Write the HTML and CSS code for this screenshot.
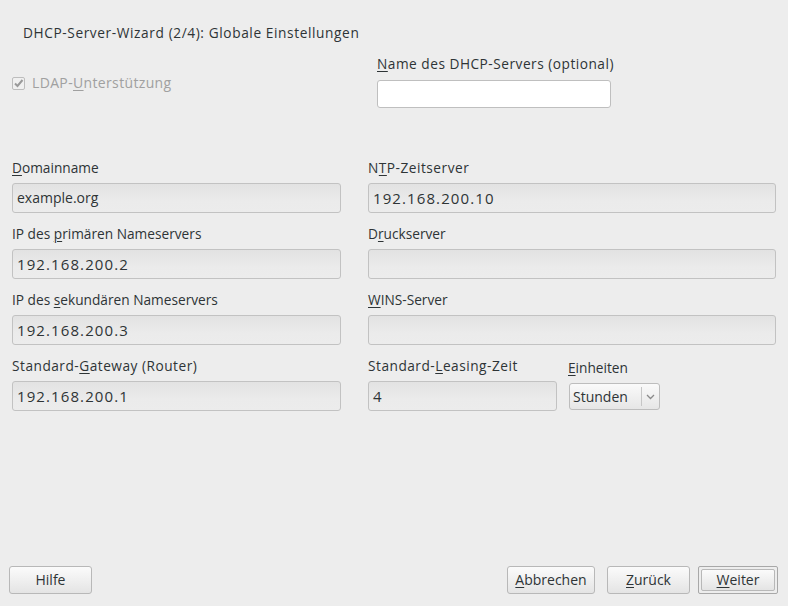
FILE: index.html
```html
<!DOCTYPE html>
<html lang="de">
<head>
<meta charset="utf-8">
<title>DHCP-Server-Wizard</title>
<link rel="stylesheet" href="styles.css">
</head>
<body>
<div class="page">
  <div class="title">DHCP-Server-Wizard (2/4): Globale Einstellungen</div>
  <div class="toprow">
    <div class="check">
      <span class="box"><svg width="11" height="11" viewBox="0 0 11 11"><path d="M2 5.5 L4.5 8 L9.5 2" fill="none" stroke="#9a9a9a" stroke-width="2"/></svg></span>
      <span class="checklabel">LDAP-<u>U</u>nterstützung</span>
    </div>
    <div class="namefield">
      <div class="label wide"><u>N</u>ame des DHCP-Servers (optional)</div>
      <div class="input white"></div>
    </div>
  </div>
  <div class="grid">
    <div class="field">
      <div class="label"><u>D</u>omainname</div>
      <div class="input">example.org</div>
    </div>
    <div class="field">
      <div class="label wide">N<u>T</u>P-Zeitserver</div>
      <div class="input ip">192.168.200.10</div>
    </div>
    <div class="field">
      <div class="label">IP des <u>p</u>rimären Nameservers</div>
      <div class="input ip">192.168.200.2</div>
    </div>
    <div class="field">
      <div class="label">D<u>r</u>uckserver</div>
      <div class="input"></div>
    </div>
    <div class="field">
      <div class="label">IP des <u>s</u>ekundären Nameservers</div>
      <div class="input ip">192.168.200.3</div>
    </div>
    <div class="field">
      <div class="label"><u>W</u>INS-Server</div>
      <div class="input"></div>
    </div>
    <div class="field">
      <div class="label wide">Standard-<u>G</u>ateway (Router)</div>
      <div class="input ip">192.168.200.1</div>
    </div>
    <div class="leaserow">
      <div class="field lease">
        <div class="label wide">Standard-<u>L</u>easing-Zeit</div>
        <div class="input ip">4</div>
      </div>
      <div class="field units">
        <div class="label unitlabel"><u>E</u>inheiten</div>
        <div class="combo">
          <span class="combotext">Stunden</span>
          <span class="comboarrow"><svg width="9" height="6" viewBox="0 0 9 6"><path d="M1 1 L4.5 4.5 L8 1" fill="none" stroke="#8a8a8a" stroke-width="1.3"/></svg></span>
        </div>
      </div>
    </div>
  </div>
  <div class="buttons">
    <button class="btn help">Hilfe</button>
    <div class="right">
      <button class="btn abort"><u>A</u>bbrechen</button>
      <button class="btn back"><u>Z</u>urück</button>
      <div class="default"><button class="btn next"><u>W</u>eiter</button></div>
    </div>
  </div>
</div>
</body>
</html>
```

FILE: styles.css
```css
html, body {
  margin: 0;
  padding: 0;
  background: #ededed;
}
body {
  font-family: "Open Sans", "Noto Sans", sans-serif;
  font-size: 13.7px;
  color: #2e3436;
}
u {
  text-decoration: underline;
  text-underline-offset: 2px;
}
.page {
  width: 788px;
  height: 606px;
  box-sizing: border-box;
  padding: 0 10px 12px 12px;
  display: flex;
  flex-direction: column;
}
.title {
  margin: 24px 0 0 11px;
  line-height: 18px;
  height: 18px;
  letter-spacing: 0.6px;
}
.toprow {
  display: grid;
  grid-template-columns: 329px 408px;
  column-gap: 27px;
  margin-top: 12px;
}
.check {
  display: flex;
  align-items: center;
  margin-top: 19px;
  height: 20px;
  color: #a0a0a0;
}
.box {
  width: 11px;
  height: 11px;
  border: 1px solid #bdbdbd;
  border-radius: 2px;
  background: #f0f0f0;
  display: flex;
  margin-right: 7px;
}
.checklabel {
  line-height: 20px;
  font-size: 14px;
  letter-spacing: 0.35px;
}
.namefield {
  padding-left: 9px;
}
.label {
  line-height: 20px;
  height: 20px;
  white-space: nowrap;
}
.label.wide {
  letter-spacing: 0.5px;
}
.namefield .label {
  margin-bottom: 6px;
}
.input {
  box-sizing: border-box;
  height: 30px;
  border: 1px solid #c2c2c2;
  border-radius: 3px;
  background: linear-gradient(#e2e2e2, #ebebeb 60%, #ececec);
  padding: 0 4px;
  line-height: 28px;
  font-size: 14px;
  color: #2e3436;
}
.input.ip {
  font-size: 15px;
  letter-spacing: 1.1px;
}
.input.white {
  width: 234px;
  height: 28px;
  background: #ffffff;
  border-color: #bfbfbf;
}
.grid {
  display: grid;
  grid-template-columns: 329px 408px;
  column-gap: 27px;
  row-gap: 11px;
  margin-top: 50px;
}
.field .label {
  margin-bottom: 5px;
}
.leaserow {
  display: flex;
  gap: 11px;
}
.lease {
  width: 189px;
}
.units {
  width: 92px;
}
.unitlabel {
  margin-top: 2px;
  margin-bottom: 5px !important;
}
.combo {
  box-sizing: border-box;
  width: 91px;
  height: 27px;
  margin-left: 1px;
  border: 1px solid #bdbdbd;
  border-radius: 3px;
  background: linear-gradient(#fafafa, #e6e6e6);
  display: flex;
  align-items: center;
}
.combotext {
  flex: 1;
  padding-left: 3px;
  font-size: 14px;
}
.comboarrow {
  width: 17px;
  height: 19px;
  border-left: 1px solid #c6c6c6;
  display: flex;
  align-items: center;
  justify-content: center;
}
.buttons {
  margin-top: auto;
  display: flex;
  justify-content: space-between;
  align-items: center;
  margin-left: -3px;
}
.right {
  display: flex;
  align-items: center;
}
.btn {
  font-family: "Open Sans", "Noto Sans", sans-serif;
  font-size: 14px;
  color: #2e3436;
  height: 28px;
  box-sizing: border-box;
  border: 1px solid #b8b8b8;
  border-radius: 3px;
  background: linear-gradient(#fbfbfb, #e4e4e4);
  padding: 0;
  line-height: 26px;
  margin: 0;
}
.help {
  width: 83px;
}
.abort {
  width: 88px;
}
.back {
  width: 83px;
  margin-left: 12px;
}
.default {
  margin-left: 8px;
  box-sizing: border-box;
  width: 80px;
  height: 28px;
  border: 1px solid #a8a8a8;
  border-radius: 2px;
  padding: 2px;
  display: flex;
}
.next {
  width: 100%;
  height: 22px;
  line-height: 20px;
  border-radius: 2px;
}
```
